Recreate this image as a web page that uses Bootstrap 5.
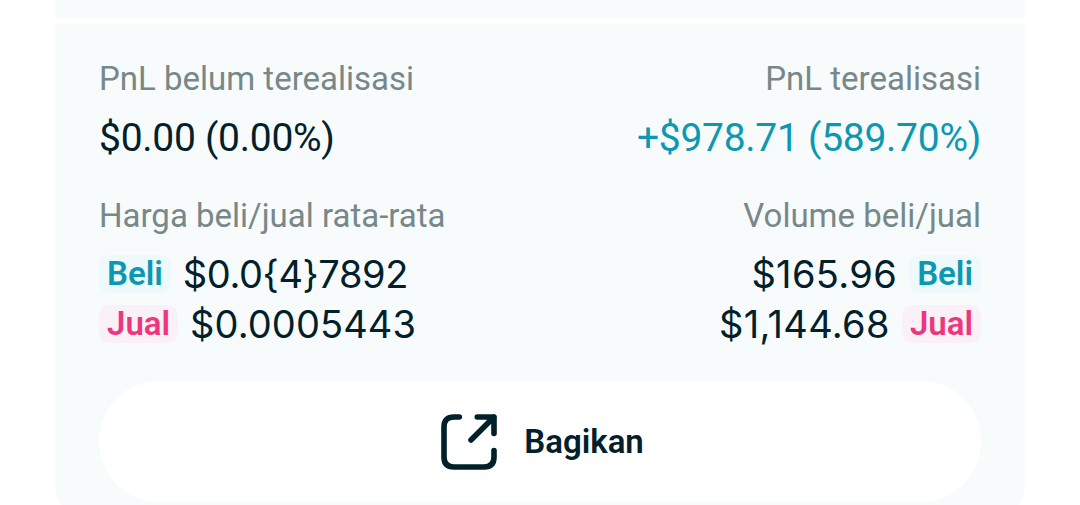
<!DOCTYPE html>
<html lang="id">
<head>
<meta charset="utf-8">
<meta name="viewport" content="width=device-width, initial-scale=1">
<title>PnL</title>
<link href="https://cdn.jsdelivr.net/npm/bootstrap@5.3.0/dist/css/bootstrap.min.css" rel="stylesheet">
<style>
  body { font-family: Roboto, sans-serif; color: #02202a; height: 505px; }
  .panel { width: 970px; background: #f7fbfc; }
  .panel-prev { height: 18px; }
  .panel-pnl { height: 501px; margin-top: 5px; padding: 35px 44px 0; border-radius: 0 0 40px 40px; }
  .caption { font-size: 33px; line-height: 42px; color: #788888; }
  .amount { font-size: 39px; letter-spacing: -.27px; line-height: 50px; margin-top: 13px; }
  .gain { color: #0d98b2; }
  .avg { margin-top: 32px; }
  .prices { margin-top: 12px; }
  .price { font-family: Inter, sans-serif; font-size: 38px; line-height: 50px; height: 50px; gap: 12px; letter-spacing: .1px; }
  .figure-buy { letter-spacing: -.4px; }
  .figure-volume { letter-spacing: .35px; }
  .tag { font-family: Roboto, sans-serif; font-size: 33px; font-weight: 600; letter-spacing: 0; line-height: 38px; height: 38px; padding: 0 8px; border-radius: 10px; }
  .tag-buy { color: #0d98b2; background: #edf9fa; }
  .tag-sell { color: #ee367f; background: #faf1f6; }
  .share { height: 121px; margin-top: 32px; background: #fff; color: #02202a; font-size: 33px; font-weight: 600; gap: 27px; padding: 0 0 0 5px; }
</style>
</head>
<body class="bg-white overflow-hidden">
<main class="d-flex flex-column align-items-center">
  <section class="panel panel-prev"></section>
  <section class="panel panel-pnl">
    <div class="d-flex justify-content-between">
      <div>
        <div class="caption"><span>PnL belum terealisasi</span></div>
        <div class="amount"><span>$0.00 (0.00%)</span></div>
      </div>
      <div class="text-end">
        <div class="caption"><span>PnL terealisasi</span></div>
        <div class="amount gain"><span>+$978.71 (589.70%)</span></div>
      </div>
    </div>
    <div class="avg d-flex justify-content-between">
      <div>
        <div class="caption"><span>Harga beli/jual rata-rata</span></div>
        <div class="prices">
          <div class="price d-flex align-items-center"><span class="tag tag-buy">Beli</span><span class="figure-buy">$0.0{4}7892</span></div>
          <div class="price d-flex align-items-center"><span class="tag tag-sell">Jual</span><span>$0.0005443</span></div>
        </div>
      </div>
      <div class="text-end">
        <div class="caption"><span>Volume beli/jual</span></div>
        <div class="prices">
          <div class="price d-flex align-items-center justify-content-end"><span class="figure-volume">$165.96</span><span class="tag tag-buy">Beli</span></div>
          <div class="price d-flex align-items-center justify-content-end"><span class="figure-volume">$1,144.68</span><span class="tag tag-sell">Jual</span></div>
        </div>
      </div>
    </div>
    <button type="button" class="share btn w-100 rounded-pill border-0 d-flex align-items-center justify-content-center">
      <svg width="56" height="56" viewBox="0 0 56 56" fill="none" stroke="currentColor" stroke-width="5.6" stroke-linecap="round" stroke-linejoin="round" aria-hidden="true">
        <path d="M18.300 3H13Q3 3 3 13V43Q3 53 13 53H43Q53 53 53 43V36.500M36.300 3H53V19.500M53 3L30 26"/>
      </svg>
      <span>Bagikan</span>
    </button>
  </section>
</main>
<script src="https://cdn.jsdelivr.net/npm/bootstrap@5.3.0/dist/js/bootstrap.bundle.min.js"></script>
</body>
</html>
